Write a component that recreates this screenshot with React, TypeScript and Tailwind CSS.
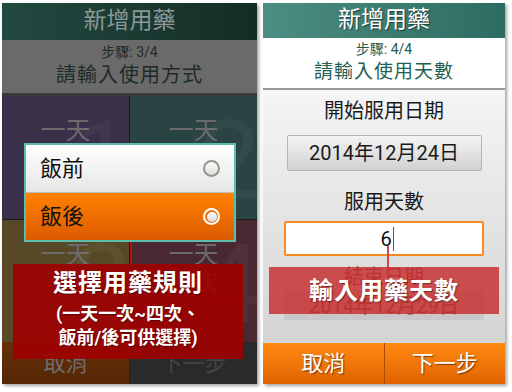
import React from 'react';

const font = "[font-family:Roboto,'Noto_Sans_CJK_TC',sans-serif]";

const Tile = ({ bg, line1, line2, digit }: any) => (
  <div className={`relative overflow-hidden flex flex-col items-center pt-[22px] ${bg}`}>
    <span className="absolute right-[-4px] top-[10px] text-[110px] leading-none text-white/[0.04]">{digit}</span>
    <span className="text-[25px] leading-[26px] text-[#6b6b6b]">{line1}</span>
    <span className="text-[25px] leading-[26px] text-[#6b6b6b] mt-[2px]">{line2}</span>
  </div>
);

const Radio = ({ on }: { on?: boolean }) =>
  on ? (
    <div className="w-[17px] h-[17px] rounded-full bg-white flex items-center justify-center">
      <div className="w-[13px] h-[13px] rounded-full bg-[#f07010] flex items-center justify-center">
        <div className="w-[10px] h-[10px] rounded-full bg-gradient-to-b from-white to-[#d8d8d8]" />
      </div>
    </div>
  ) : (
    <div className="w-[17px] h-[17px] rounded-full bg-[#9a9388] flex items-center justify-center">
      <div className="w-[13px] h-[13px] rounded-full bg-gradient-to-b from-white to-[#dcdcdc]" />
    </div>
  );

const LeftPhone = () => (
  <div className="relative w-[255px] h-[381px] flex flex-col shadow-[2px_2px_3px_rgba(0,0,0,0.35)]">
    <div className="h-[37px] flex items-center justify-center bg-gradient-to-r from-[#224a40] to-[#142c26]">
      <span className="text-[23px] text-[#8c9894]">新增用藥</span>
    </div>
    <div className="h-[53px] bg-[#6a6a6a] flex flex-col items-center pt-[3px]">
      <span className="text-[14px] leading-[19px] text-[#1d2b28]">步驟: 3/4</span>
      <span className="text-[20px] leading-[27px] text-[#1d2b28] tracking-[1px]">請輸入使用方式</span>
    </div>
    <div className="h-[3px] bg-[#3a3a3a]" />
    <div className="flex-1 grid grid-cols-2 grid-rows-2 gap-[1px] bg-[#1a1a1a]">
      <Tile bg="bg-[#3a3049]" line1="一天" line2="一次" digit="1" />
      <Tile bg="bg-[#294443]" line1="一天" line2="兩次" digit="2" />
      <Tile bg="bg-[#574927]" line1="一天" line2="三次" digit="3" />
      <Tile bg="bg-[#4a2832]" line1="一天" line2="四次" digit="4" />
    </div>
    <div className="h-[42px] grid grid-cols-2 gap-[1px] bg-[#222]">
      <div className="bg-gradient-to-b from-[#663008] to-[#552605] flex items-center justify-center text-[22px] text-[#6e6e6e]">取消</div>
      <div className="bg-[#2a2a2a] flex items-center justify-center text-[22px] text-[#444]">下一步</div>
    </div>

    <div className="absolute left-[22px] top-[140px] w-[212px] border-2 border-[#5cbcae] flex flex-col">
      <div className="h-[48px] flex items-center justify-between px-[14px] bg-gradient-to-b from-white to-[#e6e6e6] border-b border-[#bdbdbd]">
        <span className="text-[22px] text-[#111]">飯前</span>
        <Radio />
      </div>
      <div className="h-[47px] flex items-center justify-between px-[14px] bg-gradient-to-b from-[#ff8200] to-[#dc5a00]">
        <span className="text-[22px] text-[#111]">飯後</span>
        <Radio on />
      </div>
    </div>
    <div className="absolute left-[128px] top-[239px] w-[2px] h-[23px] bg-[#b81010]" />
    <div className="absolute left-[11px] top-[261px] w-[230px] h-[95px] bg-[#a00000]/90 flex flex-col items-center text-white font-bold">
      <span className="text-[24px] leading-[30px] mt-[4px] tracking-[1px] [text-shadow:1px_1px_1px_rgba(0,0,0,0.4)]">選擇用藥規則</span>
      <span className="text-[18px] leading-[24px] mt-[4px] [text-shadow:1px_1px_1px_rgba(0,0,0,0.4)]">(一天一次~四次、</span>
      <span className="text-[18px] leading-[24px] [text-shadow:1px_1px_1px_rgba(0,0,0,0.4)]">飯前/後可供選擇)</span>
    </div>
  </div>
);

const RightPhone = () => (
  <div className="relative w-[242px] h-[381px] flex flex-col shadow-[2px_2px_3px_rgba(0,0,0,0.35)]">
    <div className="h-[35px] flex items-center justify-center bg-gradient-to-r from-[#4d8e82] to-[#2d6c60]">
      <span className="text-[23px] text-white [text-shadow:1px_1px_1px_rgba(0,0,0,0.5)]">新增用藥</span>
    </div>
    <div className="h-[50px] bg-white flex flex-col items-center pt-[2px]">
      <span className="text-[14px] leading-[18px] text-[#2a5a50]">步驟: 4/4</span>
      <span className="text-[19px] leading-[27px] text-[#1e6054] tracking-[1px]">請輸入使用天數</span>
    </div>
    <div className="h-[2px] bg-[#9a9a9a]" />
    <div className="flex-1 bg-gradient-to-b from-[#f5f5f5] to-[#d4d4d4] flex flex-col items-center pt-[8px]">
      <span className="text-[20px] leading-[26px] text-[#1a1a1a]">開始服用日期</span>
      <div className="mt-[11px] w-[195px] h-[36px] rounded-[2px] border border-[#b5b5b5] bg-gradient-to-b from-[#f4f4f4] to-[#d2d2d2] flex items-center justify-center text-[20px] text-[#1a1a1a]">
        2014年12月24日
      </div>
      <span className="mt-[18px] text-[20px] leading-[26px] text-[#1a1a1a]">服用天數</span>
      <div className="mt-[6px] w-[200px] h-[35px] rounded-[2px] border-2 border-[#f78a20] bg-white flex items-center justify-center">
        <span className="text-[20px] text-[#111] ml-[6px]">6</span>
        <span className="w-[1px] h-[24px] bg-[#555] ml-[1px]" />
      </div>
      <span className="mt-[9px] text-[20px] leading-[24px] text-[#7a3030]">結束日期</span>
      <div className="mt-[2px] w-[200px] h-[29px] bg-[#c8c8c8] flex items-center justify-center text-[20px] text-[#7a3030]">
        2014年12月29日
      </div>
    </div>
    <div className="h-[41px] grid grid-cols-2 gap-[1px] bg-[#b04800]">
      <div className="bg-gradient-to-b from-[#ff8a12] to-[#e06200] flex items-center justify-center text-[22px] text-white [text-shadow:1px_1px_1px_rgba(0,0,0,0.5)]">取消</div>
      <div className="bg-gradient-to-b from-[#ff8a12] to-[#e06200] flex items-center justify-center text-[22px] text-white [text-shadow:1px_1px_1px_rgba(0,0,0,0.5)]">下一步</div>
    </div>

    <div className="absolute left-[124px] top-[243px] w-[2px] h-[22px] bg-[#d04848]" />
    <div className="absolute left-[6px] top-[264px] w-[230px] h-[47px] bg-[#c83232]/85 flex items-center justify-center">
      <span className="text-[24px] font-bold text-white tracking-[1px] [text-shadow:1px_1px_1px_rgba(0,0,0,0.4)]">輸入用藥天數</span>
    </div>
  </div>
);

export default function App() {
  return (
    <div className={`w-[512px] h-[392px] bg-white flex gap-[6px] pl-[2px] pt-[3px] ${font}`}>
      <LeftPhone />
      <RightPhone />
    </div>
  );
}
